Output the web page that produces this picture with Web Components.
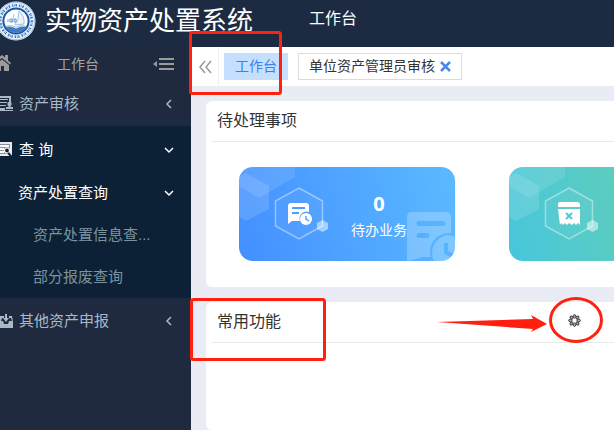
<!DOCTYPE html>
<html lang="zh-CN">
<head>
<meta charset="utf-8">
<meta name="viewport" content="width=device-width, initial-scale=1">
<title>实物资产处置系统</title>
<style>
html,body{margin:0;height:100%}
body{font:14px/20px "Liberation Sans","Noto Sans CJK SC",sans-serif;background:#e9ecf5;color:#333;overflow:hidden}
</style>
</head>
<body>
<asset-app>
  <app-header slot="header" name="实物资产处置系统"></app-header>
  <side-nav slot="side">
    <nav-item icon="audit" arrow="left">资产审核</nav-item>
    <nav-group>
      <nav-item icon="search" arrow="down" active>查 询</nav-item>
      <nav-item level="2" arrow="down" active>资产处置查询</nav-item>
      <nav-item level="3">资产处置信息查...</nav-item>
      <nav-item level="3">部分报废查询</nav-item>
    </nav-group>
    <nav-item icon="report" arrow="left">其他资产申报</nav-item>
  </side-nav>
  <tab-bar slot="tabs"></tab-bar>
  <panel-card heading="待处理事项">
    <task-tile kind="todo" count="0">待办业务</task-tile>
    <task-tile kind="scrap"></task-tile>
  </panel-card>
  <panel-card heading="常用功能" class="fill" settings></panel-card>
  <mark-layer slot="marks"></mark-layer>
</asset-app>
<script>
const base = `:host,*{box-sizing:border-box}button{font:inherit;color:inherit;background:none;border:0;padding:0;margin:0;text-align:left}a{color:inherit;text-decoration:none}svg{display:block;flex:none}`;
function define(name, render) {
  customElements.define(name, class extends HTMLElement {
    constructor() {
      super();
      this.attachShadow({mode: "open"});
    }
    connectedCallback() {
      const t = document.createElement("template");
      t.innerHTML = `<style>${base}</style>` + render(this);
      this.shadowRoot.replaceChildren(t.content.cloneNode(true));
    }
  });
}

define("asset-app", () => `
<style>
:host{display:grid;grid-template:auto 1fr / 191px minmax(0,1fr);min-height:100vh;position:relative}
header{grid-column:1 / 3}
aside{background:#1f2a40}
.work{display:flex;flex-direction:column;min-width:0}
main{flex:1;display:flex;flex-direction:column;gap:15px;padding:15px 0 0 15px;min-width:0}
::slotted(.fill){flex:1}
</style>
<header><slot name="header"></slot></header>
<aside><slot name="side"></slot></aside>
<div class="work"><slot name="tabs"></slot><main><slot></slot></main></div>
<slot name="marks"></slot>`);

define("app-header", el => `
<style>
:host{display:flex;align-items:center;height:47px;background:#1d2b42;color:#fff;padding-bottom:6px}
h1{font-size:26px;line-height:36px;font-weight:400;margin:0 0 0 9px;white-space:nowrap}
a{font-size:16px;line-height:24px;margin:0 0 3px 56px}
</style>
<svg width="36" height="41" viewBox="0 -1 36 41" aria-hidden="true">
  <circle cx="16" cy="20" r="19.5" fill="#e9f1fb"/>
  <circle cx="16" cy="20" r="18.8" fill="none" stroke="#6d9bd0" stroke-width=".6"/>
  <circle cx="16" cy="20" r="15.8" fill="none" stroke="#3f78ba" stroke-width="2.6" stroke-dasharray="1.2 .7 .6 1 1.500 2"/>
  <circle cx="16" cy="20" r="12.6" fill="#fff" stroke="#1759a8" stroke-width="2"/>
  <path d="M5 25q6-2 11 1 5-3 11-1-3 7-11 7T5 25z" fill="#3f7cc0"/>
  <path d="M6 25q5-1 10 2 5-3 10-2" fill="none" stroke="#fff"/>
  <path d="M19 10q6 5 5 13l-9 1q4-6 4-14zM14 13l-2 9" fill="#eaf2fb" stroke="#8db1da" stroke-width=".8"/>
  <path d="M8 18v3m2-3h2v3h-2zm4 0h2v3h-2z" fill="none" stroke="#3974b8" stroke-width=".7"/>
</svg>
<h1>${el.getAttribute("name")}</h1>
<a href="#">工作台</a>`);

define("side-nav", () => `
<style>
:host{display:block;color:#a9b9c5}
.top{display:flex;align-items:center;height:34px;color:#a3a29f;padding-right:17px}
.top span{margin-left:46px;flex:1}
</style>
<div class="top">
  <svg width="11" height="20" viewBox="0 0 11 20" fill="#9b9b9b" aria-hidden="true"><path d="M0 2.500L2 1l3 2.500V1h3v5.500L11 9l-1 1.500L2 4 0 5.500zM0 7l2-1.500 7 5.500v6H4v-5H1v5H0z"/></svg>
  <span>工作台</span>
  <button aria-label="收起菜单"><svg width="21" height="14" viewBox="0 0 21 14" fill="#9b9b9b"><path d="M0 7l4-3v6zM6 1h15v2H6zM6 6h15v2H6zM6 11h15v2H6z"/></svg></button>
</div>
<nav><slot></slot></nav>`);

define("nav-group", () => `
<style>:host{display:block;background:#0c2135;padding-top:1px}</style><slot></slot>`);

const navIcons = {
  audit: `<path d="M0 0h11v6H9V2H0zM0 3h8v1H0zM0 6h7v1H0zM0 9h6v1H0zM0 12h5v2h8v1H0z"/><circle cx="9.500" cy="8" r="2.200"/><path d="M8.500 9h2v2H13v2H6v-2h2.500z"/>`,
  search: `<path d="M0 0h12v14H0z" opacity=".9"/><path d="M0 2h10v10H0z" fill="#87919c"/><path d="M0 3h9v2H0zM0 6h4v2H0zM0 9h4v2H0z"/><circle cx="7" cy="8.500" r="2.500" fill="#0c2135" stroke="#fff" stroke-width="1.200"/><path d="M8 11l4 4" stroke="#0c2135" stroke-width="2"/>`,
  report: `<path d="M0 3h4v2H2L1 8h2l1 3h4l1-3h3l-1-3H9V3h3l1 6v6H0z"/><path d="M5 1h2v4h2L6 9 3 5h2z"/>`
};
define("nav-item", el => {
  const level = el.getAttribute("level") || "1", icon = el.getAttribute("icon"), arrow = el.getAttribute("arrow");
  return `
<style>
:host{display:block;font-size:15px;line-height:22px}
:host([active]){color:#fff}
:host([level="3"]){color:#7c939f}
button{display:flex;align-items:center;width:100%;height:45px;padding-right:17px}
button.l2,button.l3{height:42px}
.text{flex:1;white-space:nowrap;padding-left:6px}
.l2 .text{padding-left:18px}.l3 .text{padding-left:33px}
</style>
<button class="l${level}">
${icon ? `<svg width="13" height="16" viewBox="0 0 13 16" fill="currentColor" aria-hidden="true">${navIcons[icon]}</svg>` : ""}
<span class="text"><slot></slot></span>
${arrow ? `<svg width="10" height="10" viewBox="0 0 10 10" fill="none" stroke="currentColor" stroke-width="1.500" aria-hidden="true"><path d="${arrow === "left" ? "M7 1L3 5l4 4" : "M1 3l4 4 4-4"}"/></svg>` : ""}
</button>`;
});

define("tab-bar", () => `
<style>
:host{display:flex;align-items:center;height:39px;background:#fff;white-space:nowrap}
.back{width:28px;height:39px;border-right:1px solid #eceef2;display:grid;place-items:center}
.tab{height:27px;line-height:25px;display:flex;align-items:center}
.on{background:#c5e0ff;color:#3a80ee;margin-left:5px;padding:0 11px}
.box{border:1px solid #d8dce5;margin-left:10px;padding:0 10px;gap:5px}
.close{display:block}
</style>
<button class="back" aria-label="向左"><svg width="14" height="14" viewBox="0 0 14 14" fill="none" stroke="#999" stroke-width="1.500"><path d="M7 1L2 7l5 6M13 1L8 7l5 6"/></svg></button>
<button class="tab on">工作台</button>
<div class="tab box"><a href="#">单位资产管理员审核</a><button class="close" aria-label="关闭"><svg width="11" height="11" viewBox="0 0 11 11" stroke="#4a88e8" stroke-width="2.500"><path d="M1 1l9 9M10 1l-9 9"/></svg></button></div>`);

const petals = [0, 45, 90, 135, 180, 225, 270, 315].map(a => `<ellipse cy="-4.200" rx="1.300" ry="1.700" transform="rotate(${a})"/>`).join("");
define("panel-card", el => `
<style>
:host{display:block;background:#fff;border-radius:6px 0 0 6px;min-width:0;overflow:hidden}
.head{display:flex;align-items:center;justify-content:space-between;height:41px;margin-left:6px;padding:0 33px 0 5px;border-bottom:1px solid #e9e9e9}
h2{font-size:16px;line-height:24px;font-weight:400;margin:0}
.tiles{display:flex;gap:54px;padding:25px 33px 26px}
</style>
<div class="head"><h2>${el.getAttribute("heading")}</h2>
${el.hasAttribute("settings") ? `<button aria-label="设置"><svg width="13" height="16" viewBox="-6.500 -6.500 13 16" fill="#aaa" stroke="#444" stroke-width="1">${petals}</svg></button>` : ""}</div>
${el.children.length ? `<div class="tiles"><slot></slot></div>` : ""}`);

define("task-tile", el => {
  const todo = el.getAttribute("kind") === "todo";
  return `
<style>
:host{display:block;flex:none;width:216px;color:#fff}
a{display:grid;grid-template-columns:1fr;height:94px;border-radius:14px;overflow:hidden;background:${todo ? "linear-gradient(75deg,#438fff,#5bbaff)" : "linear-gradient(75deg,#47c6dc,#70d2a5)"}}
a>*{grid-area:1 / 1}
.info{display:flex;flex-direction:column;align-items:center;padding:25px 0 0 64px}
strong{font:bold 20px/24px "Noto Sans",sans-serif}
.label{line-height:20px;margin-top:4px}
</style>
<a href="#">
<svg width="216" height="94" viewBox="0 0 216 94" aria-hidden="true">
  <path d="M0 0h56v10L20 31 0 19z" fill="#fff" opacity=".11"/>
  <path d="M0 10l7-4 23 13v23L7 54 0 50z" fill="#fff" opacity=".13"/>
  <path d="M60 21l23.500 13v25L60 72 36.500 59V34z" fill="#fff" fill-opacity=".04" stroke="#fff" stroke-opacity=".42" stroke-width="1.500"/>
  <path d="M83.500 53l5.500 3v6l-5.500 3-5.500-3v-6z" fill="#fff" opacity=".5"/>
  ${todo ? `
  <path d="M52 36h15q3 0 3 3v6a7 7 0 0 0-9 9H53l-4 3V39q0-3 3-3z" fill="#fff"/><circle cx="67" cy="52" r="6" fill="#fff"/>
  <path d="M53 41h13M53 46h7" stroke="#4d9fff" stroke-width="2"/><path d="M67 49v3l3 2" fill="none" stroke="#4d9fff" stroke-width="1.500"/>
  <g fill="#fff" opacity=".24"><path d="M173 45h34q5 0 5 5v16c-16-1-24 14-20 24h-9l-15 5V50q0-5 5-5zM180 54a2 2 0 0 0 0 5h24a2 2 0 0 0 0-5zM180 66a2 2 0 0 0 0 5h8a2 2 0 0 0 0-5z" fill-rule="evenodd"/><path d="M209 68a18 18 0 0 1 7 2v24h-21a18 18 0 0 1 14-26zM205 76v9q0 2 2 3l9 4v-5l-7-3v-8z" fill-rule="evenodd"/></g>` : `
  <path d="M51 35h17q3 0 3 3v2H49v-2q0-3 2-3zM49 42h22v16l-2-2-2 2-2-2-2 2-3-2-2 2-2-2-2 2-2-2-1 2z" fill="#fff"/>
  <path d="M57 46l6 6M63 46l-6 6" stroke="#50c8d1" stroke-width="2"/>`}
</svg>
${todo ? `<div class="info"><strong>${el.getAttribute("count")}</strong><span class="label"><slot></slot></span></div>` : ""}
</a>`;
});

/* Red callouts that lie over the page */
define("mark-layer", () => `
<style>:host{position:absolute;inset:0;pointer-events:none;overflow:hidden}</style>
<svg width="614" height="430" viewBox="0 0 614 430" fill="none" stroke="#ff2010" stroke-width="3" aria-hidden="true">
  <rect x="190.500" y="32.500" width="90" height="61" rx="2"/>
  <rect x="191.500" y="299.500" width="133" height="60" rx="2"/>
  <ellipse cx="576" cy="320" rx="25.500" ry="21.500"/>
  <path d="M437 322L533 319l-2-4 16 9-16 8 2-3z" fill="#ff2010" stroke="none"/>
</svg>`);
</script>
</body>
</html>
